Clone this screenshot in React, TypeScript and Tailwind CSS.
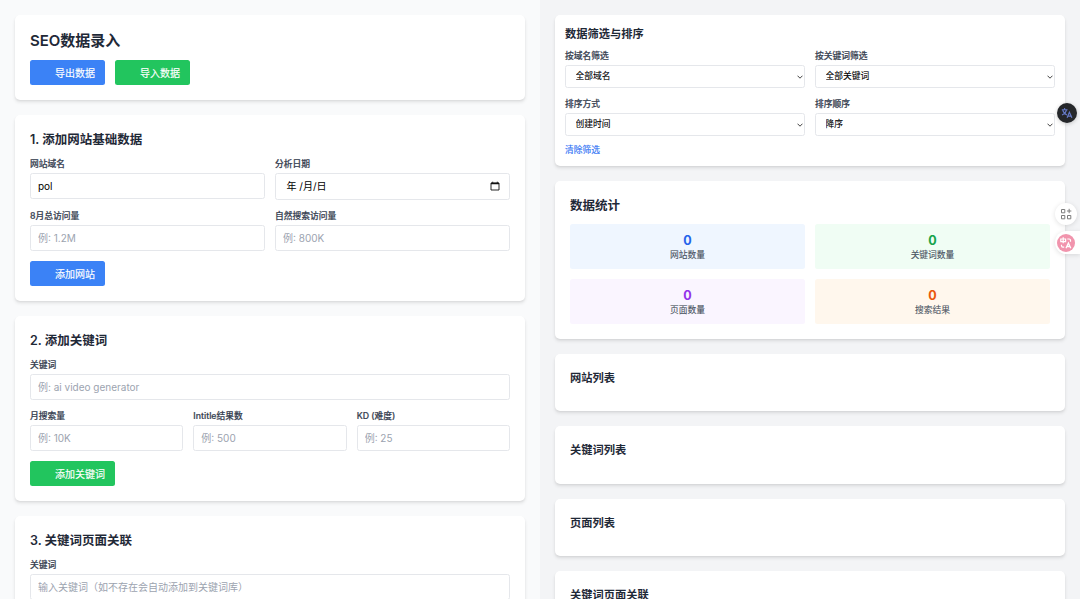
import { useState } from 'react';
import type { ReactNode } from 'react';

interface CardProps {
  children: ReactNode;
  compact?: boolean;
}

interface FieldProps {
  label: string;
  placeholder?: string;
  initialValue?: string;
}

interface SelectFieldProps {
  label: string;
  options: string[];
}

const stats = [
  { label: '网站数量', value: 0, box: 'bg-[#eff6ff]', text: 'text-[#2563eb]' },
  { label: '关键词数量', value: 0, box: 'bg-[#f0fdf4]', text: 'text-[#16a34a]' },
  { label: '页面数量', value: 0, box: 'bg-[#faf5ff]', text: 'text-[#9333ea]' },
  { label: '搜索结果', value: 0, box: 'bg-[#fff7ed]', text: 'text-[#ea580c]' },
];

const lists = ['网站列表', '关键词列表', '页面列表', '关键词页面关联'];

function Card({ children, compact }: CardProps) {
  return (
    <section
      className={`shrink-0 rounded-[5px] bg-white shadow-[0_2.5px_3.75px_-0.6px_rgba(0,0,0,0.1),0_1.25px_2.5px_-1.25px_rgba(0,0,0,0.1)] ${
        compact ? 'p-[10px]' : 'p-[15px]'
      }`}
    >
      {children}
    </section>
  );
}

function CardTitle({ children }: { children: ReactNode }) {
  return (
    <h2 className="mb-[10px] pt-[2px] text-[12.5px] leading-[15.5px] font-semibold text-[#1f2937]">{children}</h2>
  );
}

function Label({ children }: { children: ReactNode }) {
  return (
    <span className="mb-[2.5px] block pt-[1px] text-[8.75px] leading-[11.5px] font-medium text-[#374151] [-webkit-text-stroke:0.2px_#374151]">
      {children}
    </span>
  );
}

function Field({ label, placeholder, initialValue = '' }: FieldProps) {
  const [value, setValue] = useState(initialValue);

  return (
    <label className="block min-w-0">
      <Label>{label}</Label>
      <input
        value={value}
        placeholder={placeholder}
        onChange={(e) => setValue(e.target.value)}
        className="block h-[26.25px] w-full rounded-[2.5px] border border-[#e5e7eb] bg-white px-[7px] text-[10px] leading-[15px] text-black placeholder:text-[#9ca3af]"
      />
    </label>
  );
}

function DateField({ label }: { label: string }) {
  return (
    <div className="min-w-0">
      <Label>{label}</Label>
      <div className="flex h-[27.5px] items-center justify-between rounded-[2.5px] border border-[#e5e7eb] bg-white pr-[9px] pl-[10.5px] text-[10px] leading-[15px] text-black">
        <span className="whitespace-pre">年 /月/日</span>
        <svg viewBox="0 0 10 10" className="size-[10px]" fill="none" stroke="#111" strokeWidth="0.9">
          <path d="M1 2h8v7H1z" />
          <path d="M1 2.5h8" strokeWidth="1.5" />
          <path d="M2.7.7v1.2M7.3.7v1.2" />
        </svg>
      </div>
    </div>
  );
}

function SelectField({ label, options }: SelectFieldProps) {
  return (
    <label className="block min-w-0">
      <Label>{label}</Label>
      <span className="grid grid-cols-[1fr_8px] items-center">
        <select className="col-span-2 col-start-1 row-start-1 h-[23px] w-full appearance-none rounded-[2.5px] border border-[#e5e7eb] bg-white px-[9.5px] text-[8.75px] leading-[12.5px] text-black [-webkit-text-stroke:0.1px_#000]">
          {options.map((option) => (
            <option key={option}>{option}</option>
          ))}
        </select>
        <svg
          viewBox="0 0 6 4"
          className="pointer-events-none col-start-2 row-start-1 h-[4px] w-[6px]"
          fill="none"
          stroke="#222"
          strokeWidth="0.85"
        >
          <path d="M.5.7 3 3.2 5.5.7" />
        </svg>
      </span>
    </label>
  );
}

function ActionButton({ children, color }: { children: ReactNode; color: 'blue' | 'green' }) {
  return (
    <button
      className={`block h-[25px] rounded-[2.5px] pt-[1px] pr-[10px] pl-[25px] text-[10px] leading-[15px] text-white [-webkit-text-stroke:0.15px_#fff] ${
        color === 'blue' ? 'bg-[#3b82f6]' : 'bg-[#22c55e]'
      }`}
    >
      {children}
    </button>
  );
}

function FloatingTools() {
  return (
    <>
      <button className="absolute top-[103px] left-[1057px] flex size-[20px] items-center justify-center rounded-full bg-[#25272a] shadow-[0_1px_4px_rgba(0,0,0,0.2)]">
        <svg viewBox="0 0 12 12" className="size-[12px]" fill="none" stroke="#6579c4" strokeWidth="1.1">
          <path d="M.8 2.7h5.7M3.6 1v1.7M1.7 2.9c.5 2.3 2 4 4.2 5M5.5 2.9C5 5.2 3.5 7 1 8" />
          <path d="m6.1 10.8 2.3-5.6 2.5 5.6M7 9.1h3.1" strokeWidth="1.2" />
        </svg>
      </button>
      <button className="absolute top-[203px] left-[1055px] flex size-[22px] items-center justify-center rounded-full bg-white shadow-[0_1px_5px_rgba(0,0,0,0.12)]">
        <svg viewBox="0 0 12 12" className="size-[12px]" fill="none" stroke="#7c7c7c" strokeWidth="1">
          <path d="M1.5 1.5h3.3v3.3H1.5zM1.5 7.5h3.3v3.3H1.5zM7.5 7.5h3.3v3.3H7.5zM9.15.8v4.4M6.95 3h4.4" />
        </svg>
      </button>
      <button className="absolute top-[231px] left-[1055px] flex h-[23px] w-[25px] items-center rounded-l-full bg-white pl-[2px] shadow-[0_1px_5px_rgba(0,0,0,0.12)]">
        <svg viewBox="0 0 18 18" className="size-[18px]" fill="none" stroke="white">
          <circle cx="9" cy="9" r="9" fill="#f194ad" stroke="none" />
          <path d="M3.8 5h4.8v2.7H3.8zM6.2 3.3v6" strokeWidth="1.2" />
          <path d="M10.3 5h1.9q1.3 0 1.3 1.3v1.5M4.5 10.8v1q0 1.4 1.4 1.4h1.3" strokeWidth="1.2" />
          <path d="m9 14.3 2.4-5.2 2.4 5.2M10 12.5h2.9" strokeWidth="1.3" />
        </svg>
      </button>
    </>
  );
}

export default function App() {
  return (
    <div className="relative grid h-[599px] w-[1080px] grid-cols-2 overflow-hidden font-['Inter','Noto_Sans_CJK_SC',sans-serif]">
      <main className="flex min-h-0 flex-col gap-[15px] overflow-hidden bg-[#f9fafb] p-[15px]">
        <Card>
          <h1 className="mb-[10px] pt-[2px] text-[15px] leading-[18px] font-semibold text-[#1f2937]">SEO数据录入</h1>
          <div className="flex gap-[10px]">
            <ActionButton color="blue">导出数据</ActionButton>
            <ActionButton color="green">导入数据</ActionButton>
          </div>
        </Card>

        <Card>
          <CardTitle>1. 添加网站基础数据</CardTitle>
          <div className="mb-[10px] grid grid-cols-2 gap-[10px]">
            <Field label="网站域名" initialValue="pol" />
            <DateField label="分析日期" />
            <Field label="8月总访问量" placeholder="例: 1.2M" />
            <Field label="自然搜索访问量" placeholder="例: 800K" />
          </div>
          <ActionButton color="blue">添加网站</ActionButton>
        </Card>

        <Card>
          <CardTitle>2. 添加关键词</CardTitle>
          <div className="mb-[10px]">
            <Field label="关键词" placeholder="例: ai video generator" />
          </div>
          <div className="mb-[10px] grid grid-cols-3 gap-[10px]">
            <Field label="月搜索量" placeholder="例: 10K" />
            <Field label="Intitle结果数" placeholder="例: 500" />
            <Field label="KD (难度)" placeholder="例: 25" />
          </div>
          <ActionButton color="green">添加关键词</ActionButton>
        </Card>

        <Card>
          <CardTitle>3. 关键词页面关联</CardTitle>
          <Field label="关键词" placeholder="输入关键词（如不存在会自动添加到关键词库）" />
        </Card>
      </main>

      <aside className="flex min-h-0 flex-col gap-[15px] overflow-hidden bg-[#f3f4f6] p-[15px]">
        <Card compact>
          <h2 className="mb-[7.5px] pt-[2px] text-[11.25px] leading-[15.5px] font-semibold text-[#1f2937]">
            数据筛选与排序
          </h2>
          <div className="mb-[7.5px] grid grid-cols-2 gap-[10px]">
            <SelectField label="按域名筛选" options={['全部域名']} />
            <SelectField label="按关键词筛选" options={['全部关键词']} />
            <SelectField label="排序方式" options={['创建时间']} />
            <SelectField label="排序顺序" options={['降序', '升序']} />
          </div>
          <button className="block h-[12.75px] text-[8.75px] leading-[12.5px] text-[#2f72f5] [-webkit-text-stroke:0.15px_#2f72f5]">
            清除筛选
          </button>
        </Card>

        <Card>
          <CardTitle>数据统计</CardTitle>
          <div className="grid grid-cols-2 gap-[10px]">
            {stats.map((stat) => (
              <div key={stat.label} className={`rounded-[2.5px] p-[7.5px] text-center ${stat.box}`}>
                <div className={`pt-[2px] text-[12.5px] leading-[15.5px] font-bold ${stat.text}`}>{stat.value}</div>
                <div className="pt-[1px] text-[8.75px] leading-[11.5px] text-[#4b5563] [-webkit-text-stroke:0.1px_#4b5563]">
                  {stat.label}
                </div>
              </div>
            ))}
          </div>
        </Card>

        {lists.map((title) => (
          <Card key={title}>
            <h2 className="mb-[10px] pt-[2px] text-[11.25px] leading-[15.5px] font-semibold text-[#1f2937]">{title}</h2>
          </Card>
        ))}
      </aside>

      <FloatingTools />
    </div>
  );
}
